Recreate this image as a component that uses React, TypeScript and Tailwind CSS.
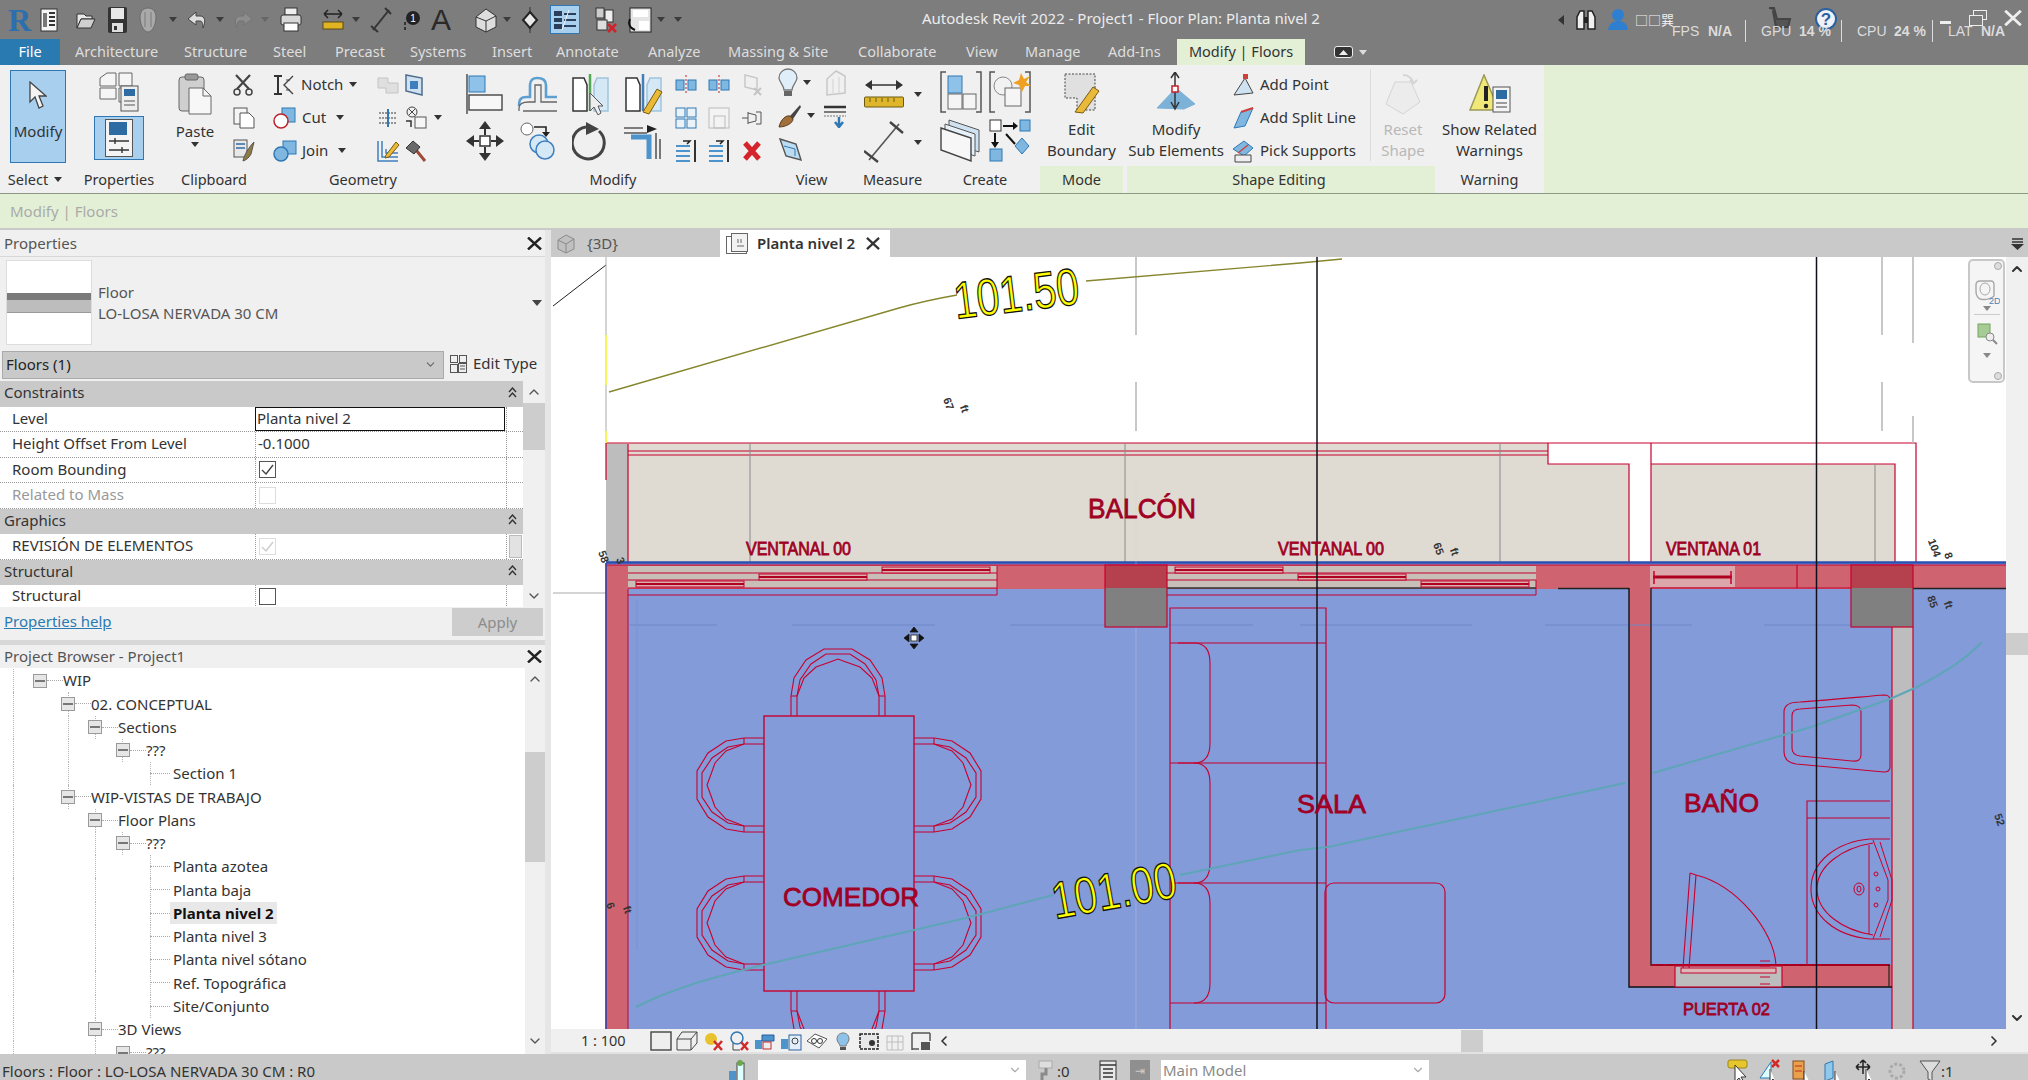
import type { ReactNode } from 'react'
import { ChevronDown, ChevronLeft, ChevronRight, ChevronUp } from 'lucide-react'

const Svg = ({ w, h, children }: { w: number; h: number; children: ReactNode }) => (
  <svg width={w} height={h} viewBox={`0 0 ${w} ${h}`} fill="none" className="shrink-0">
    {children}
  </svg>
)

const Caret = ({ color = '#444' }: { color?: string }) => (
  <svg width="8" height="5" viewBox="0 0 8 5" className="shrink-0">
    <path d="M0 0H8L4 5Z" fill={color} />
  </svg>
)

const CloseX = ({ w = 15, h = 13, color = '#222' }: { w?: number; h?: number; color?: string }) => (
  <svg width={w} height={h} viewBox="0 0 15 13" fill="none" className="shrink-0">
    <path d="M1 0.5L14 12.500M14 0.5L1 12.500" stroke={color} strokeWidth="2.4" />
  </svg>
)

/* quick access toolbar */
const QatHome = () => (
  <Svg w={18} h={24}>
    <rect x="1" y="1" width="16" height="22" fill="#f5f5f5" stroke="#333" />
    <path d="M9 5H15M9 9H15M9 13H15M9 17H15" stroke="#333" strokeWidth="2" />
    <rect x="3" y="5" width="4" height="14" fill="#777" />
  </Svg>
)
const QatOpen = () => (
  <Svg w={20} h={20}>
    <path d="M1 4H8L10 6H16V9H5L1 18Z" fill="#e8e8e8" stroke="#333" />
    <path d="M5 9H19L15 18H1Z" fill="#cfcfcf" stroke="#333" />
  </Svg>
)
const QatSave = () => (
  <Svg w={21} h={28}>
    <rect x="1" y="1" width="19" height="26" rx="2" fill="#333" />
    <rect x="4" y="2" width="13" height="11" fill="#e8e8e8" />
    <rect x="5" y="17" width="11" height="9" fill="#ddd" />
    <rect x="7" y="20" width="3" height="4" fill="#333" />
  </Svg>
)
const QatSync = () => (
  <Svg w={20} h={26}>
    <path d="M10 1C15 1 18 5 18 10C18 18 14 25 10 25C6 25 2 18 2 10C2 5 5 1 10 1Z" fill="#a9a9a9" stroke="#6b6b6b" />
    <path d="M7 5V20M13 5V20" stroke="#7a7a7a" />
  </Svg>
)
const QatUndo = ({ color = '#ddd' }: { color?: string }) => (
  <Svg w={20} h={20}>
    <path d="M9 2L1 9L9 15V11H13C15 11 16 13 16 18C19 11 18 6 13 6H9Z" fill={color} stroke="#444" />
  </Svg>
)
const QatRedo = () => (
  <Svg w={20} h={20}>
    <path d="M11 2L19 9L11 15V11H7C5 11 4 13 4 18C1 11 2 6 7 6H11Z" fill="#8d8d8d" stroke="#747474" />
  </Svg>
)
const QatPrint = () => (
  <Svg w={22} h={26}>
    <rect x="5" y="1" width="12" height="7" fill="#eee" stroke="#333" />
    <rect x="1" y="8" width="20" height="10" rx="2" fill="#d8d8d8" stroke="#333" />
    <rect x="4" y="16" width="14" height="8" fill="#fff" stroke="#333" />
  </Svg>
)
const QatRuler = () => (
  <Svg w={22} h={24}>
    <path d="M2 6H20M2 6L6 2M2 6L6 10M20 6L16 2M20 6L16 10" stroke="#222" strokeWidth="1.5" />
    <rect x="1" y="14" width="20" height="7" fill="#e0b422" stroke="#5b4a14" />
  </Svg>
)
const QatDiag = () => (
  <Svg w={22} h={26}>
    <path d="M3 23L19 3" stroke="#333" strokeWidth="2" />
    <path d="M1 19L8 25M15 1L21 7" stroke="#333" strokeWidth="2" />
  </Svg>
)
const QatTag = () => (
  <Svg w={20} h={24}>
    <circle cx="13" cy="10" r="7" fill="#222" />
    <text x="13" y="14" fontSize="10" fill="#fff" textAnchor="middle" fontFamily="Liberation Sans">1</text>
    <path d="M5 22V14" stroke="#333" strokeWidth="2" strokeDasharray="3 2" />
  </Svg>
)
const QatHouse = () => (
  <Svg w={22} h={26}>
    <path d="M1 10L11 2L21 9V20L11 25L1 20Z" fill="#ddd" stroke="#333" />
    <path d="M1 10L11 14L21 9M11 14V25" stroke="#333" />
  </Svg>
)
const QatSection = () => (
  <Svg w={20} h={28}>
    <path d="M10 1V27" stroke="#333" />
    <path d="M10 6L17 14L10 22L3 14Z" fill="#e8e8e8" stroke="#222" strokeWidth="2" />
  </Svg>
)
const QatThin = () => (
  <div className="w-[30px] h-[29px] bg-[#a9cfef] border border-[#2f78b4] flex items-center justify-center">
    <Svg w={24} h={22}>
      <rect x="1" y="2" width="8" height="5" fill="#2a3f5c" />
      <rect x="1" y="9" width="8" height="4" fill="#2a3f5c" />
      <rect x="1" y="15" width="8" height="5" fill="#2a3f5c" />
      <path d="M11 5H23M11 11H23M11 17H23" stroke="#2a3f5c" strokeWidth="2" />
      <path d="M9 21L16 1" stroke="#f5f5f5" />
    </Svg>
  </div>
)
const QatHidden = () => (
  <Svg w={24} h={28}>
    <rect x="2" y="2" width="8" height="10" fill="#ccc" stroke="#333" />
    <rect x="11" y="4" width="8" height="12" fill="#eee" stroke="#333" />
    <rect x="3" y="14" width="10" height="10" fill="#ddd" stroke="#333" />
    <path d="M14 18L22 26M22 18L14 26" stroke="#d0222a" strokeWidth="2.5" />
  </Svg>
)
const QatSwitch = () => (
  <Svg w={26} h={26}>
    <rect x="3" y="1" width="21" height="24" fill="#e5e5e5" stroke="#222" />
    <rect x="6" y="3" width="15" height="7" fill="#fff" />
    <rect x="12" y="14" width="10" height="9" fill="#fff" />
    <path d="M3 12C1 17 3 21 8 23" stroke="#111" strokeWidth="2" />
  </Svg>
)

/* ribbon icons */
const Pointer = () => (
  <Svg w={18} h={28}>
    <path d="M1 1V21L6 16L10 27L14 25L10 15H17Z" fill="#f4f4f4" stroke="#444" strokeWidth="1.3" />
  </Svg>
)
const TypeProps = () => (
  <Svg w={40} h={40}>
    <path d="M1 6L8 1H17V14H1ZM1 16H17V27L1 27ZM20 1H33V14H20ZM20 16H24V30H20Z" fill="#f5f5f5" stroke="#666" />
    <rect x="22" y="14" width="17" height="25" fill="#eee" stroke="#555" />
    <rect x="25" y="17" width="11" height="7" fill="#2e6ba3" />
    <path d="M25 29H36M25 33H36" stroke="#555" />
  </Svg>
)
const PropsPalette = () => (
  <div className="w-[50px] h-[44px] bg-[#a9cfef] border border-[#2f78b4] flex items-center justify-center">
    <Svg w={28} h={38}>
      <rect x="0.5" y="0.5" width="27" height="37" fill="#f4f4f4" stroke="#555" />
      <rect x="4" y="3" width="18" height="13" fill="#2e6ba3" />
      <path d="M4 22H24M4 31H24M10 19V25M17 28V34" stroke="#333" strokeWidth="1.4" />
    </Svg>
  </div>
)
const PasteIcon = () => (
  <Svg w={34} h={42}>
    <rect x="1" y="4" width="25" height="34" rx="3" fill="#cfcfcf" stroke="#666" />
    <rect x="7" y="1" width="13" height="6" rx="2" fill="#999" stroke="#666" />
    <path d="M11 15H25L33 23V41H11Z" fill="#f7f7f7" stroke="#666" />
    <path d="M25 15V23H33" stroke="#666" />
  </Svg>
)
const CutIcon = () => (
  <Svg w={20} h={22}>
    <path d="M3 1L16 15M17 1L4 15" stroke="#444" strokeWidth="2.2" />
    <circle cx="4" cy="18" r="3" stroke="#444" strokeWidth="1.5" />
    <circle cx="16" cy="18" r="3" stroke="#444" strokeWidth="1.5" />
  </Svg>
)
const CopyIcon = () => (
  <Svg w={22} h={22}>
    <rect x="1" y="1" width="13" height="16" fill="#f5f5f5" stroke="#555" />
    <path d="M7 6H16L21 11V21H7Z" fill="#fff" stroke="#555" />
  </Svg>
)
const MatchIcon = () => (
  <Svg w={22} h={24}>
    <rect x="1" y="1" width="13" height="17" fill="#e8e8e8" stroke="#555" />
    <path d="M3 5H12M3 9H12" stroke="#2e6ba3" strokeWidth="1.5" />
    <path d="M10 22C11 16 16 8 21 3L18 15C16 19 13 21 10 22Z" fill="#8f7c45" stroke="#555" />
  </Svg>
)
const NotchIcon = () => (
  <Svg w={22} h={22}>
    <path d="M1 2H9M1 20H9M5 2V20" stroke="#333" strokeWidth="2" />
    <path d="M20 2L11 11L20 20" stroke="#444" strokeWidth="1.4" />
    <path d="M13 6L17 6M13 16L17 16" stroke="#444" />
  </Svg>
)
const CutGeo = () => (
  <Svg w={24} h={22}>
    <rect x="9" y="1" width="13" height="14" fill="#7fb7e0" stroke="#2f78b4" />
    <circle cx="8" cy="14" r="7" fill="#fff" stroke="#c0222a" strokeWidth="1.5" />
  </Svg>
)
const JoinGeo = () => (
  <Svg w={24} h={22}>
    <rect x="10" y="1" width="13" height="13" fill="#7fb7e0" stroke="#2f78b4" />
    <circle cx="8" cy="14" r="7" fill="#7fb7e0" stroke="#2f78b4" strokeWidth="1.5" />
  </Svg>
)
const Gray3d = () => (
  <Svg w={24} h={24}>
    <path d="M2 5H12V10H22V20H10V15H2Z" fill="#dfdfdf" stroke="#c4c4c4" />
  </Svg>
)
const WallOpen = () => (
  <Svg w={20} h={24}>
    <path d="M2 2L18 5V22L2 18Z" fill="#cfe2f2" stroke="#4d6c8c" strokeWidth="1.5" />
    <rect x="6" y="8" width="8" height="8" fill="#3f7fbf" />
  </Svg>
)
const SplitGeo = () => (
  <Svg w={22} h={20}>
    <path d="M2 5H20M2 10H20M2 15H20" stroke="#777" strokeWidth="1.5" strokeDasharray="2 1" />
    <path d="M11 1V19" stroke="#2f78b4" strokeWidth="2" />
  </Svg>
)
const JoinSwitch = () => (
  <Svg w={24} h={24}>
    <circle cx="8" cy="6" r="5" stroke="#444" />
    <path d="M5 3L11 9M11 3L5 9" stroke="#444" />
    <rect x="11" y="11" width="11" height="11" stroke="#555" fill="#f6f6f6" />
    <path d="M2 15H7V21" stroke="#333" strokeWidth="1.5" />
  </Svg>
)
const PencilCorner = () => (
  <Svg w={24} h={24}>
    <path d="M2 2V22H22M6 2V18H22M10 10V14H22" stroke="#3f7fbf" strokeWidth="1.5" />
    <path d="M10 16L20 3L23 6L13 18L9 19Z" fill="#e9b93a" stroke="#7a5a12" />
  </Svg>
)
const Hammer = () => (
  <Svg w={24} h={24}>
    <path d="M12 11L21 22" stroke="#a04a3a" strokeWidth="3" />
    <path d="M2 9L9 2L16 8L10 15Z" fill="#6a6a6a" stroke="#333" />
  </Svg>
)
const AlignIcon = () => (
  <Svg w={38} h={42}>
    <path d="M1 1V41" stroke="#444" strokeWidth="1.4" />
    <rect x="3" y="3" width="16" height="16" fill="#8fc2e8" stroke="#2f78b4" />
    <rect x="3" y="22" width="33" height="15" fill="#f7f7f7" stroke="#444" strokeWidth="1.4" />
  </Svg>
)
const OffsetIcon = () => (
  <Svg w={42} h={38}>
    <path d="M2 31C2 24 4 22 10 22H13V10C13 5 16 3 20 3C26 3 29 5 29 10V22H40" stroke="#5c9fd0" strokeWidth="2.6" />
    <path d="M2 36V33C2 29 6 27 12 27H18V10H24V27H40M6 36H40" stroke="#666" strokeWidth="1.3" />
  </Svg>
)
const MirrorPick = ({ line, pen }: { line: string; pen?: boolean }) => (
  <Svg w={38} h={42}>
    <path d="M1 5H12L15 12V38H1Z" fill="#fff" stroke="#333" strokeWidth="1.5" />
    <path d="M25 5H36V38H22V12Z" fill="#d5e8f5" stroke="#9fc3dd" strokeWidth="1.5" />
    <path d="M18 1V38" stroke={line} strokeWidth="2.5" />
    {pen ? (
      <path d="M18 39L32 16L37 19L24 41Z" fill="#eab935" stroke="#7a5a12" />
    ) : (
      <path d="M18 20V38L22 34L26 42L29 40L26 33H31Z" fill="#eee" stroke="#555" />
    )}
  </Svg>
)
const MoveIcon = () => (
  <Svg w={40} h={42}>
    <path d="M20 1L26 9H14ZM20 41L14 33H26ZM1 21L9 15V27ZM39 21L31 15V27Z" fill="#333" />
    <path d="M20 9V15M20 27V33M9 21H14M26 21H31" stroke="#333" strokeWidth="2" />
    <rect x="15" y="16" width="10" height="10" stroke="#333" strokeWidth="1.5" fill="#fff" />
  </Svg>
)
const CopyCircles = () => (
  <Svg w={38} h={38}>
    <circle cx="8" cy="7" r="6" stroke="#666" fill="#fff" />
    <path d="M15 5H27V11" stroke="#222" strokeWidth="1.6" />
    <path d="M23 10H31L27 15Z" fill="#222" />
    <circle cx="20" cy="22" r="9" stroke="#3f7fbf" strokeWidth="1.5" fill="#d5e8f5" />
    <circle cx="26" cy="28" r="9" stroke="#3f7fbf" strokeWidth="1.5" fill="#d5e8f5" />
  </Svg>
)
const RotateIcon = () => (
  <Svg w={38} h={40}>
    <path d="M14 6A16 16 0 1 0 27 10" stroke="#444" strokeWidth="3" />
    <path d="M14 1L27 8L14 14Z" fill="#444" />
  </Svg>
)
const TrimIcon = () => (
  <Svg w={42} h={40}>
    <path d="M1 7H20M1 12H24" stroke="#555" strokeWidth="1.6" />
    <path d="M24 4L34 8L24 12Z" fill="#222" />
    <path d="M8 16H26V38" stroke="#4d94cc" strokeWidth="5" />
    <path d="M33 12V38M37 18V38" stroke="#444" strokeWidth="1.4" />
  </Svg>
)
const SplitVert = () => (
  <Svg w={22} h={20}>
    <rect x="1" y="5" width="8" height="10" fill="#7fb7e0" stroke="#2f78b4" />
    <rect x="13" y="5" width="8" height="10" fill="#7fb7e0" stroke="#2f78b4" />
    <path d="M11 0V20" stroke="#c0222a" strokeDasharray="2 2" />
  </Svg>
)
const GrayPin = () => (
  <Svg w={22} h={24}>
    <path d="M4 2L16 5V17L4 14Z" stroke="#c8c8c8" strokeWidth="1.5" />
    <path d="M13 15L20 22M20 15L13 22" stroke="#c4c4c4" strokeWidth="2" />
  </Svg>
)
const ArrayIcon = () => (
  <Svg w={22} h={22}>
    <rect x="1" y="1" width="9" height="9" stroke="#2f78b4" fill="#eaf3fa" />
    <rect x="12" y="1" width="9" height="9" stroke="#2f78b4" fill="#eaf3fa" />
    <rect x="1" y="12" width="9" height="9" stroke="#2f78b4" fill="#eaf3fa" />
    <rect x="12" y="12" width="9" height="9" stroke="#2f78b4" fill="#eaf3fa" />
  </Svg>
)
const ScaleIcon = () => (
  <Svg w={22} h={24}>
    <rect x="1" y="2" width="20" height="20" stroke="#bbb" fill="#f3f3f3" />
    <rect x="6" y="10" width="11" height="12" stroke="#bbb" />
  </Svg>
)
const PinIcon = () => (
  <Svg w={22} h={20}>
    <path d="M1 10H7M7 4V16M7 5L15 7V13L7 15M15 4H20V16H15" stroke="#555" />
  </Svg>
)
const TrimList = () => (
  <Svg w={22} h={24}>
    <path d="M1 7H15M1 12H15M1 17H15M1 22H15" stroke="#4d94cc" strokeWidth="2" />
    <path d="M8 2H15L12 5" stroke="#222" strokeWidth="1.5" />
    <path d="M20 1V23" stroke="#333" strokeWidth="2" />
  </Svg>
)
const DeleteX = () => (
  <Svg w={20} h={22}>
    <path d="M3 3L17 19M17 3L3 19" stroke="#d5242c" strokeWidth="5" />
  </Svg>
)
const Bulb = () => (
  <Svg w={20} h={30}>
    <path d="M10 1C15 1 19 5 19 10C19 14 14 17 14 22H6C6 17 1 14 1 10C1 5 5 1 10 1Z" fill="#dfeef9" stroke="#777" strokeWidth="1.3" />
    <rect x="6" y="23" width="8" height="5" fill="#666" />
  </Svg>
)
const GrayBuild = () => (
  <Svg w={24} h={28}>
    <path d="M3 10L12 2L21 7V24L3 26Z" stroke="#c8c8c8" strokeWidth="1.5" />
    <path d="M9 10V24M15 8V24" stroke="#d2d2d2" />
  </Svg>
)
const Brush = () => (
  <Svg w={24} h={24}>
    <path d="M12 12L22 1L23 3L15 15Z" fill="#444" />
    <path d="M1 23C3 15 8 11 12 12L15 15C15 19 8 23 1 23Z" fill="#a0703c" stroke="#5c3d1a" />
  </Svg>
)
const ThinLines = () => (
  <Svg w={22} h={24}>
    <path d="M0 3H22" stroke="#333" strokeWidth="2.5" />
    <path d="M0 8H22" stroke="#555" strokeWidth="1.5" />
    <path d="M0 12H22" stroke="#777" strokeDasharray="2 1" />
    <path d="M15 13V21M11 18L15 23L19 18" stroke="#2f78b4" strokeWidth="2.5" />
  </Svg>
)
const SectionBox = () => (
  <Svg w={24} h={26}>
    <path d="M2 3L18 8L23 24L8 20Z" fill="#bcdcf2" stroke="#555" strokeWidth="1.4" />
    <path d="M6 10L17 13V20" stroke="#2f78b4" />
  </Svg>
)
const DimLine = () => (
  <Svg w={40} h={30}>
    <path d="M2 6H38" stroke="#333" strokeWidth="1.5" />
    <path d="M1 6L8 1V11ZM39 6L32 1V11Z" fill="#333" />
    <rect x="0.5" y="18" width="39" height="10" rx="1" fill="#dfb62a" stroke="#6a5a14" />
    <path d="M6 19V23M12 19V23M18 19V23M24 19V23M30 19V23" stroke="#6a5a14" />
  </Svg>
)
const DiagDim = () => (
  <Svg w={40} h={42}>
    <path d="M5 39L35 3" stroke="#555" strokeWidth="1.6" />
    <path d="M0 30L14 41M26 1L39 12" stroke="#444" strokeWidth="2.4" />
  </Svg>
)
const GroupBox = () => (
  <Svg w={42} h={42}>
    <path d="M6 1H1V41H6M36 1H41V41H36" stroke="#555" strokeWidth="1.5" />
    <rect x="8" y="5" width="14" height="17" fill="#8fc2e8" stroke="#2f78b4" />
    <rect x="8" y="23" width="14" height="15" fill="#f5f5f5" stroke="#666" />
    <rect x="23" y="23" width="13" height="15" fill="#f5f5f5" stroke="#666" />
  </Svg>
)
const InPlaceBox = () => (
  <Svg w={42} h={42}>
    <path d="M6 1H1V41H6M36 1H41V41H36" stroke="#555" strokeWidth="1.5" />
    <circle cx="14" cy="15" r="9" fill="#f2f2f2" stroke="#888" />
    <rect x="16" y="17" width="16" height="18" fill="#f5f5f5" stroke="#666" />
    <path d="M32 2L35 8L41 5L37 11L42 15L36 15L33 21L30 14L24 12L30 9Z" fill="#f0a020" />
  </Svg>
)
const Folders = () => (
  <Svg w={42} h={44}>
    <path d="M9 2L39 12V34L9 24Z" fill="#cfe2f2" stroke="#555" />
    <path d="M5 6L35 16V38L5 28Z" fill="#e6f0f8" stroke="#555" />
    <path d="M1 10L31 20V43L1 32Z" fill="#f7f7f7" stroke="#444" strokeWidth="1.4" />
  </Svg>
)
const Flow = () => (
  <Svg w={42} h={44}>
    <rect x="1" y="2" width="11" height="11" fill="#fff" stroke="#333" />
    <path d="M14 8H26" stroke="#111" strokeWidth="2" />
    <path d="M24 4L29 8L24 12Z" fill="#111" />
    <rect x="31" y="2" width="10" height="11" fill="#7fb7e0" stroke="#2f78b4" />
    <path d="M6 15V26" stroke="#111" strokeWidth="2" />
    <path d="M2 24H10L6 30Z" fill="#111" />
    <path d="M17 16L26 26" stroke="#111" strokeWidth="2" />
    <rect x="1" y="31" width="12" height="12" fill="#7fb7e0" stroke="#2f78b4" />
    <path d="M33 20L40 28L33 36L26 28Z" fill="#7fb7e0" stroke="#2f78b4" />
  </Svg>
)
const EditBoundary = () => (
  <Svg w={38} h={42}>
    <path d="M2 2H32V38H14V26H2Z" fill="#e0e0e0" stroke="#444" strokeDasharray="2 1.5" />
    <path d="M12 40L30 15L36 19L20 41Z" fill="#e9b93a" stroke="#7a5a12" />
  </Svg>
)
const SubElements = () => (
  <Svg w={40} h={42}>
    <path d="M1 36L20 16L39 32L28 37Z" fill="#7db2d8" stroke="#7db2d8" />
    <path d="M19 1V35M15 6L19 0L23 6M15 30L19 37L23 30" stroke="#333" strokeWidth="1.5" />
    <rect x="16" y="14" width="6" height="6" fill="#fff" stroke="#c0222a" strokeWidth="1.5" />
  </Svg>
)
const AddPoint = () => (
  <Svg w={22} h={24}>
    <path d="M2 22L13 5L21 20Z" fill="#cfe2f2" stroke="#444" />
    <rect x="11" y="1" width="5" height="5" fill="#d0403a" />
  </Svg>
)
const AddSplit = () => (
  <Svg w={22} h={24}>
    <path d="M2 22L9 6L21 2L13 20Z" fill="#7fb7e0" stroke="#2f78b4" />
    <path d="M9 6L21 2" stroke="#d0403a" strokeWidth="2" />
  </Svg>
)
const PickSupports = () => (
  <Svg w={22} h={24}>
    <path d="M1 10L12 2L21 9L12 17Z" fill="#7fb7e0" stroke="#2f78b4" />
    <path d="M3 16H19V23H3Z" fill="#eee" stroke="#444" />
    <path d="M6 14L16 6" stroke="#d0403a" strokeWidth="1.5" />
  </Svg>
)
const ResetShape = () => (
  <Svg w={40} h={44}>
    <path d="M3 32L12 10H28L37 30L20 42Z" fill="#ececec" stroke="#d5d5d5" />
    <path d="M20 3C26 3 30 7 30 12M30 12L27 8M30 12L34 8" stroke="#d5d5d5" strokeWidth="2" />
  </Svg>
)
const WarnIcon = () => (
  <Svg w={42} h={40}>
    <path d="M15 1L30 36H1Z" fill="#f0e878" stroke="#9a9a55" strokeWidth="1.5" />
    <path d="M17 12V27" stroke="#222" strokeWidth="4" />
    <circle cx="17" cy="32" r="2.2" fill="#222" />
    <rect x="24" y="13" width="17" height="25" fill="#f4f4f4" stroke="#555" />
    <rect x="27" y="16" width="11" height="9" fill="#2e6ba3" />
    <path d="M27 29H38M27 33H38" stroke="#444" />
  </Svg>
)
const GrayStatus = ({ color = '#7a7a7a' }: { color?: string }) => (
  <Svg w={20} h={22}>
    <rect x="2" y="1" width="16" height="20" fill="#e8e8e8" stroke={color} />
    <path d="M2 5H18M5 9H15M5 13H15M5 17H15" stroke={color} strokeWidth="1.4" />
  </Svg>
)

const Panel = ({ className, label, labelClass = '', children }: { className: string; label?: ReactNode; labelClass?: string; children: ReactNode }) => (
  <div className={`flex flex-col shrink-0 ${className}`}>
    <div className="h-[101px] flex">{children}</div>
    <div className={`h-[27px] flex items-center justify-center text-[14.500px] text-[#333] ${labelClass}`}>{label}</div>
  </div>
)

const IconCell = ({ className = '', children }: { className?: string; children: ReactNode }) => (
  <div className={`flex items-center justify-center ${className}`}>{children}</div>
)

function TitleBar() {
  return (
    <div className="relative h-[39px] bg-[#7d7d7d] flex items-center shrink-0">
      <div className="w-[40px] pl-[8px] font-['Liberation_Serif'] font-bold text-[32px] leading-none text-[#2b6fae]">R</div>
      <QatHome />
      <div className="ml-[18px]"><QatOpen /></div>
      <div className="ml-[11px]"><QatSave /></div>
      <div className="ml-[10px]"><QatSync /></div>
      <div className="ml-[11px]"><Caret color="#3c3c3c" /></div>
      <div className="ml-[10px]"><QatUndo /></div>
      <div className="ml-[9px]"><Caret color="#3c3c3c" /></div>
      <div className="ml-[9px]"><QatRedo /></div>
      <div className="ml-[8px]"><Caret color="#666" /></div>
      <div className="ml-[11px]"><QatPrint /></div>
      <div className="ml-[20px]"><QatRuler /></div>
      <div className="ml-[8px]"><Caret color="#3c3c3c" /></div>
      <div className="ml-[10px]"><QatDiag /></div>
      <div className="ml-[8px]"><QatTag /></div>
      <div className="ml-[10px] w-[22px] font-['Liberation_Sans'] text-[30px] leading-none text-[#2a2a2a] text-center">A</div>
      <div className="ml-[23px]"><QatHouse /></div>
      <div className="ml-[6px]"><Caret color="#3c3c3c" /></div>
      <div className="ml-[9px]"><QatSection /></div>
      <div className="ml-[10px]"><QatThin /></div>
      <div className="ml-[14px]"><QatHidden /></div>
      <div className="ml-[9px]"><QatSwitch /></div>
      <div className="ml-[4px]"><Caret color="#3c3c3c" /></div>
      <div className="ml-[9px]"><Caret color="#3c3c3c" /></div>
      <div className="absolute left-[922px] top-[7px] text-[15px] text-[#ececec] whitespace-nowrap">Autodesk Revit 2022 - Project1 - Floor Plan: Planta nivel 2</div>

      {/* info center, with the HUD lying over it */}
      <div className="absolute left-[1558px] top-0 h-[39px] flex items-center">
        <svg width="6" height="10" viewBox="0 0 6 10"><path d="M6 0V10L0 5Z" fill="#333" /></svg>
        <div className="ml-[11px]">
          <Svg w={22} h={22}>
            <path d="M2 20V8L5 2H9V20ZM13 20V2H17L20 8V20Z" fill="#f0f0f0" stroke="#222" strokeWidth="1.5" />
            <rect x="9" y="8" width="4" height="6" fill="#222" />
          </Svg>
        </div>
        <div className="ml-[10px]">
          <Svg w={22} h={24}>
            <circle cx="11" cy="7" r="6" fill="#2e7fd0" />
            <path d="M1 22C2 15 6 13 11 13C16 13 20 15 21 22Z" fill="#2e7fd0" />
          </Svg>
        </div>
        <div className="ml-[6px] text-[13px] text-[#f0f0f0] whitespace-nowrap font-['Noto_Sans_CJK_SC']">□□巽</div>
      </div>
      <div className="absolute left-[1768px] top-[7px]">
        <Svg w={24} h={26}>
          <path d="M1 1H6L9 12H22L20 20H8L5 4" fill="#555" stroke="#444" strokeWidth="2" />
        </Svg>
      </div>
      <div className="absolute left-[1815px] top-[5px]">
        <Svg w={22} h={28}>
          <circle cx="11" cy="14" r="10" fill="#eef2f6" stroke="#2a5fa0" strokeWidth="2" />
          <text x="11" y="20" fontSize="17" fontWeight="700" textAnchor="middle" fill="#2a5fa0" fontFamily="Liberation Sans">?</text>
        </Svg>
      </div>
      <div className="absolute left-[1672px] top-[22px] w-[356px] h-[17px] flex items-center text-[14px] leading-none text-[#dcdcdc] whitespace-nowrap font-['Liberation_Sans']">
        <span className="w-[36px]">FPS</span>
        <span className="w-[37px] font-bold">N/A</span>
        <span className="w-px h-[22px] bg-[#ddd]" />
        <span className="w-[15px]" />
        <span className="w-[38px]">GPU</span>
        <span className="w-[42px] font-bold">14 %</span>
        <span className="w-px h-[22px] bg-[#ddd]" />
        <span className="w-[15px]" />
        <span className="w-[37px]">CPU</span>
        <span className="w-[38px] font-bold">24 %</span>
        <span className="w-px h-[22px] bg-[#ddd]" />
        <span className="w-[15px]" />
        <span className="w-[33px]">LAT</span>
        <span className="font-bold">N/A</span>
      </div>
      <div className="absolute left-[1940px] top-[21px] w-[11px] h-[3px] bg-[#eee]" />
      <div className="absolute left-[1969px] top-[10px]">
        <Svg w={18} h={16}>
          <rect x="4.5" y="0.5" width="13" height="9" stroke="#eee" />
          <rect x="0.5" y="5.5" width="13" height="10" stroke="#eee" fill="#7d7d7d" />
        </Svg>
      </div>
      <div className="absolute left-[2004px] top-[10px]"><CloseX w={18} h={16} color="#eee" /></div>
    </div>
  )
}

function TabRow() {
  const tabs: [string, string][] = [
    ['Architecture', 'w-[109px]'],
    ['Structure', 'w-[89px]'],
    ['Steel', 'w-[62px]'],
    ['Precast', 'w-[75px]'],
    ['Systems', 'w-[82px]'],
    ['Insert', 'w-[64px]'],
    ['Annotate', 'w-[92px]'],
    ['Analyze', 'w-[80px]'],
    ['Massing & Site', 'w-[130px]'],
    ['Collaborate', 'w-[108px]'],
    ['View', 'w-[59px]'],
    ['Manage', 'w-[83px]'],
    ['Add-Ins', 'w-[69px]'],
  ]
  return (
    <div className="h-[26px] bg-[#7d7d7d] flex items-stretch text-[14.500px] shrink-0">
      <div className="w-[60px] mr-[15px] bg-[#2a7ab2] text-white flex items-center justify-center">File</div>
      {tabs.map(([label, w]) => (
        <div key={label} className={`${w} text-[#dedede] flex items-center`}>{label}</div>
      ))}
      <div className="w-[128px] bg-[#e3f0d6] text-[#333] flex items-center justify-center">Modify | Floors</div>
      <div className="ml-[29px] flex items-center gap-[6px]">
        <div className="w-[19px] h-[12px] rounded-[3px] bg-[#333] border border-[#eee] flex items-center justify-center">
          <svg width="9" height="5" viewBox="0 0 9 5"><path d="M0 5L4.500 0L9 5Z" fill="#eee" /></svg>
        </div>
        <Caret color="#ddd" />
      </div>
    </div>
  )
}

function Ribbon() {
  return (
    <div className="h-[129px] bg-[#e3f0d6] border-b border-[#8b9a83] flex shrink-0">
      <div className="w-[1040px] flex bg-[#f0f0f0]">
        <Panel className="w-[78px]" label={<span className="flex items-center gap-[6px] -ml-[8px]">Select <Caret color="#333" /></span>}>
          <div className="ml-[10px] mt-[5px] w-[56px] h-[93px] bg-[#a9cfef] border border-[#2f78b4] flex flex-col items-center pt-[10px] text-[15px] text-[#333]">
            <Pointer />
            <span className="mt-[11px]">Modify</span>
          </div>
        </Panel>
        <Panel className="w-[82px]" label="Properties">
          <div className="w-full flex flex-col items-center pt-[7px] gap-[4px]">
            <TypeProps />
            <PropsPalette />
          </div>
        </Panel>
        <Panel className="w-[108px]" label="Clipboard">
          <div className="w-[70px] flex flex-col items-center pt-[8px] text-[15px] text-[#333]">
            <PasteIcon />
            <span className="mt-[5px] leading-[22px]">Paste</span>
            <Caret color="#333" />
          </div>
          <div className="flex-1 grid grid-rows-3 h-[99px] mt-[3px]">
            <IconCell className="justify-start pl-[3px]"><CutIcon /></IconCell>
            <IconCell className="justify-start pl-[3px]"><CopyIcon /></IconCell>
            <IconCell className="justify-start pl-[3px]"><MatchIcon /></IconCell>
          </div>
        </Panel>
        <Panel className="w-[190px]" label="Geometry">
          <div className="w-[104px] pl-[5px] grid grid-rows-3 h-[99px] mt-[3px] text-[15px] text-[#333]">
            <div className="flex items-center gap-[6px]"><NotchIcon /> Notch <Caret color="#333" /></div>
            <div className="flex items-center gap-[5px]"><CutGeo /> Cut <span className="ml-[5px]"><Caret color="#333" /></span></div>
            <div className="flex items-center gap-[5px]"><JoinGeo /> Join <span className="ml-[5px]"><Caret color="#333" /></span></div>
          </div>
          <div className="w-[32px] grid grid-rows-3 h-[99px] mt-[3px]">
            <IconCell><Gray3d /></IconCell>
            <IconCell><SplitGeo /></IconCell>
            <IconCell><PencilCorner /></IconCell>
          </div>
          <div className="flex-1 grid grid-rows-3 h-[99px] mt-[3px]">
            <IconCell className="justify-start"><WallOpen /></IconCell>
            <IconCell className="justify-start gap-[6px]"><JoinSwitch /> <Caret color="#333" /></IconCell>
            <IconCell className="justify-start"><Hammer /></IconCell>
          </div>
        </Panel>
        <Panel className="w-[310px]" label="Modify">
          <div className="w-[212px] grid grid-cols-4 grid-rows-2 h-[99px] pt-[5px]">
            <IconCell><AlignIcon /></IconCell>
            <IconCell><OffsetIcon /></IconCell>
            <IconCell><MirrorPick line="#53a853" /></IconCell>
            <IconCell><MirrorPick line="#3f7fbf" pen /></IconCell>
            <IconCell><MoveIcon /></IconCell>
            <IconCell><CopyCircles /></IconCell>
            <IconCell><RotateIcon /></IconCell>
            <IconCell><TrimIcon /></IconCell>
          </div>
          <div className="flex-1 grid grid-cols-3 grid-rows-3 h-[99px] mt-[3px]">
            <IconCell><SplitVert /></IconCell>
            <IconCell><SplitVert /></IconCell>
            <IconCell><GrayPin /></IconCell>
            <IconCell><ArrayIcon /></IconCell>
            <IconCell><ScaleIcon /></IconCell>
            <IconCell><PinIcon /></IconCell>
            <IconCell><TrimList /></IconCell>
            <IconCell><TrimList /></IconCell>
            <IconCell><DeleteX /></IconCell>
          </div>
        </Panel>
        <Panel className="w-[87px]" label="View">
          <div className="w-[56px] pl-[10px] grid grid-rows-3 h-[99px] mt-[1px]">
            <div className="flex items-center gap-[5px]"><Bulb /> <Caret color="#333" /></div>
            <div className="flex items-center gap-[5px]"><Brush /> <Caret color="#333" /></div>
            <div className="flex items-center"><SectionBox /></div>
          </div>
          <div className="flex-1 grid grid-rows-3 h-[99px] mt-[1px]">
            <IconCell className="justify-start"><GrayBuild /></IconCell>
            <IconCell className="justify-start"><ThinLines /></IconCell>
          </div>
        </Panel>
        <Panel className="w-[75px]" label="Measure">
          <div className="flex flex-col pl-[9px] pt-[4px] gap-[12px] h-[99px]">
            <div className="flex items-center gap-[10px] mt-[10px]"><DimLine /> <Caret color="#333" /></div>
            <div className="flex items-center gap-[10px]"><DiagDim /> <Caret color="#333" /></div>
          </div>
        </Panel>
        <Panel className="w-[110px]" label="Create">
          <div className="w-full grid grid-cols-2 grid-rows-2 h-[99px] px-[6px] pt-[3px]">
            <IconCell><GroupBox /></IconCell>
            <IconCell><InPlaceBox /></IconCell>
            <IconCell><Folders /></IconCell>
            <IconCell><Flow /></IconCell>
          </div>
        </Panel>
      </div>
      <div className="flex bg-[#f0f0f0] w-[504px]">
        <Panel className="w-[83px]" label="Mode" labelClass="bg-[#e3f0d6]">
          <div className="w-full flex flex-col items-center pt-[7px] text-[15px] leading-[21px] text-[#333] text-center">
            <EditBoundary />
            <span className="mt-[5px]">Edit</span>
            <span>Boundary</span>
          </div>
        </Panel>
        <Panel className="w-[312px]" label="Shape Editing" labelClass="bg-[#e3f0d6] ml-[4px] pr-[4px]">
          <div className="w-[106px] flex flex-col items-center pt-[7px] text-[15px] leading-[21px] text-[#333] text-center whitespace-nowrap">
            <SubElements />
            <span className="mt-[5px]">Modify</span>
            <span>Sub Elements</span>
          </div>
          <div className="w-[141px] pl-[3px] grid grid-rows-3 h-[99px] mt-[3px] text-[15px] text-[#333] whitespace-nowrap">
            <div className="flex items-center gap-[6px]"><AddPoint /> Add Point</div>
            <div className="flex items-center gap-[6px]"><AddSplit /> Add Split Line</div>
            <div className="flex items-center gap-[6px]"><PickSupports /> Pick Supports</div>
          </div>
          <div className="w-px h-[92px] mt-[4px] bg-[#dcdcdc]" />
          <div className="flex-1 flex flex-col items-center pt-[7px] text-[15px] leading-[21px] text-[#b8b8b8] text-center">
            <ResetShape />
            <span className="mt-[3px]">Reset</span>
            <span>Shape</span>
          </div>
        </Panel>
        <Panel className="flex-1" label="Warning">
          <div className="w-full flex flex-col items-center pt-[9px] text-[15px] leading-[21px] text-[#333] text-center whitespace-nowrap">
            <WarnIcon />
            <span className="mt-[5px]">Show Related</span>
            <span>Warnings</span>
          </div>
        </Panel>
      </div>
    </div>
  )
}

const DoubleUp = () => (
  <svg width="9" height="11" viewBox="0 0 9 11" fill="none" className="shrink-0">
    <path d="M1 5L4.500 1L8 5M1 10L4.500 6L8 10" stroke="#333" strokeWidth="1.4" />
  </svg>
)

const GroupRow = ({ label }: { label: string }) => (
  <div className="h-[25.500px] bg-[#c9c9c9] flex items-center text-[15px] text-[#333] pl-[4px] pr-[6px] pb-[3px] justify-between">
    <span>{label}</span>
    <DoubleUp />
  </div>
)

const ValueRow = ({ label, muted, h = 'h-[25.500px]', gutter, children }: { label: string; muted?: boolean; h?: string; gutter?: ReactNode; children?: ReactNode }) => (
  <div className={`${h} bg-white flex text-[15px] border-b border-dotted border-[#999] overflow-hidden`}>
    <div className={`w-[255px] pl-[12px] pb-[2px] flex items-center ${muted ? 'text-[#999]' : 'text-[#333]'}`}>{label}</div>
    <div className="w-[252px] border-x border-dotted border-[#999] flex items-center text-[#333]">{children}</div>
    <div className="flex-1 flex items-center justify-center">{gutter}</div>
  </div>
)

const Check = ({ checked, muted }: { checked?: boolean; muted?: boolean }) => (
  <div className={`ml-[3px] w-[17px] h-[17px] border flex items-center justify-center ${muted ? 'border-[#ddd]' : 'border-[#555]'}`}>
    {checked && (
      <svg width="13" height="11" viewBox="0 0 13 11" fill="none">
        <path d="M1 6L5 10L12 1" stroke={muted ? '#ccc' : '#444'} strokeWidth="1.4" />
      </svg>
    )}
  </div>
)

function PropertiesPanel() {
  return (
    <div className="shrink-0">
      <div className="h-[27px] pl-[4px] pr-[3px] flex items-center justify-between text-[15px] text-[#555] border-b border-[#d8d8d8]">
        <span>Properties</span>
        <CloseX />
      </div>
      <div className="h-[91px] flex items-center relative">
        <div className="ml-[6px] w-[86px] h-[85px] bg-white border border-[#ddd] flex flex-col justify-center">
          <div className="h-[7px] bg-[#7a7a7a]" />
          <div className="h-[13px] bg-[#bdbdbd] border-b border-[#999]" />
        </div>
        <div className="ml-[6px] text-[15px] leading-[21px] text-[#555]">
          <div>Floor</div>
          <div>LO-LOSA NERVADA 30 CM</div>
        </div>
        <svg width="10" height="6" viewBox="0 0 10 6" className="ml-auto mr-[3px]"><path d="M0 0H10L5 6Z" fill="#444" /></svg>
      </div>
      <div className="h-[28px] mt-[3px] flex items-center">
        <div className="ml-[2px] w-[442px] h-[28px] bg-[#c9c9c9] border border-[#aaa] flex items-center justify-between pl-[3px] pr-[6px] pb-[2px] text-[15px] text-[#222]">
          <span>Floors (1)</span>
          <ChevronDown className="w-[13px] h-[13px] text-[#666]" />
        </div>
        <div className="ml-[6px] pb-[3px] flex items-center gap-[6px] text-[15px] text-[#333]">
          <Svg w={17} h={18}>
            <rect x="0.5" y="0.5" width="7" height="7" stroke="#555" />
            <rect x="9.500" y="0.5" width="7" height="7" stroke="#555" />
            <rect x="0.5" y="9.500" width="7" height="8" stroke="#555" />
            <rect x="8.500" y="8.500" width="8" height="9" fill="#eee" stroke="#555" />
            <path d="M10 11H15M10 14H15" stroke="#555" />
          </Svg>
          Edit Type
        </div>
      </div>
      <div className="h-[226px] mt-[2px] flex">
        <div className="w-[523px] overflow-hidden">
          <GroupRow label="Constraints" />
          <ValueRow label="Level">
            <div className="w-full h-[24px] bg-white border border-[#111] flex items-center pl-[1px] pb-[2px] -ml-px">Planta nivel 2</div>
          </ValueRow>
          <ValueRow label="Height Offset From Level"><span className="pl-[2px] pb-[2px]">-0.1000</span></ValueRow>
          <ValueRow label="Room Bounding"><Check checked /></ValueRow>
          <ValueRow label="Related to Mass" muted><Check muted /></ValueRow>
          <GroupRow label="Graphics" />
          <ValueRow label="REVISIÓN DE ELEMENTOS" gutter={<div className="w-[13px] h-[23px] bg-[#e2e2e2] border border-[#bbb]" />}>
            <Check checked muted />
          </ValueRow>
          <GroupRow label="Structural" />
          <ValueRow label="Structural" h="h-[24px]"><Check /></ValueRow>
        </div>
        <div className="w-[22px] bg-[#f0f0f0] flex flex-col items-center">
          <div className="h-[22px] flex items-center"><ChevronUp className="w-[16px] h-[16px] text-[#555]" strokeWidth={2} /></div>
          <div className="w-full h-[47px] bg-[#cdcdcd]" />
          <div className="mt-auto h-[22px] flex items-center"><ChevronDown className="w-[16px] h-[16px] text-[#555]" strokeWidth={2} /></div>
        </div>
      </div>
      <div className="h-[33px] flex items-center justify-between pl-[4px] pr-[2px]">
        <span className="text-[15px] text-[#2a7ab2] underline pb-[5px]">Properties help</span>
        <div className="w-[91px] h-[28px] mb-[3px] bg-[#cdcdcd] flex items-center justify-center text-[15px] text-[#8c8c8c]">Apply</div>
      </div>
    </div>
  )
}

type TreeRow = { level: number; label: string; box: boolean; bold?: boolean; guides: number[] }

const indents = ['ml-[33px]', 'ml-[61px]', 'ml-[88px]', 'ml-[116px]', 'ml-[150px]']

const treeRows: TreeRow[] = [
  { level: 0, label: 'WIP', box: true, guides: [13] },
  { level: 1, label: '02. CONCEPTUAL', box: true, guides: [13, 68] },
  { level: 2, label: 'Sections', box: true, guides: [13, 68, 95] },
  { level: 3, label: '???', box: true, guides: [13, 68, 122] },
  { level: 4, label: 'Section 1', box: false, guides: [13, 68, 150] },
  { level: 1, label: 'WIP-VISTAS DE TRABAJO', box: true, guides: [13, 68] },
  { level: 2, label: 'Floor Plans', box: true, guides: [13, 95] },
  { level: 3, label: '???', box: true, guides: [13, 95, 122] },
  { level: 4, label: 'Planta azotea', box: false, guides: [13, 95, 150] },
  { level: 4, label: 'Planta baja', box: false, guides: [13, 95, 150] },
  { level: 4, label: 'Planta nivel 2', box: false, bold: true, guides: [13, 95, 150] },
  { level: 4, label: 'Planta nivel 3', box: false, guides: [13, 95, 150] },
  { level: 4, label: 'Planta nivel sótano', box: false, guides: [13, 95, 150] },
  { level: 4, label: 'Ref. Topográfica', box: false, guides: [13, 95, 150] },
  { level: 4, label: 'Site/Conjunto', box: false, guides: [13, 95, 150] },
  { level: 2, label: '3D Views', box: true, guides: [13, 95] },
  { level: 3, label: '???', box: true, guides: [13, 95] },
]

function ProjectBrowser() {
  return (
    <div className="flex-1 flex flex-col min-h-0">
      <div className="h-[23px] pl-[4px] pr-[3px] flex items-center justify-between text-[15px] text-[#555] shrink-0">
        <span>Project Browser - Project1</span>
        <CloseX />
      </div>
      <div className="flex-1 flex min-h-0">
        <div className="w-[525px] bg-white overflow-hidden text-[15px] text-[#333] pt-[1px]">
          {treeRows.map((r, i) => (
            <div key={i} className="relative h-[23.250px] flex items-center whitespace-nowrap">
              {r.guides.map(g => (
                <span key={g} className="absolute top-0 bottom-0 border-l border-dotted border-[#b5b5b5]" style={{ left: g }} />
              ))}
              <div className={`relative flex items-center ${indents[r.level]}`}>
                {r.box ? (
                  <div className="w-[14px] h-[14px] bg-[#e6e6e6] border border-[#9a9a9a] flex items-center justify-center">
                    <span className="w-[10px] h-[2px] bg-[#777]" />
                  </div>
                ) : null}
                <span className={`border-t border-dotted border-[#aaa] ${r.box ? 'w-[16px]' : 'w-[20px]'}`} />
                <span className={`${r.box ? '' : 'pl-[3px]'} ${r.bold ? 'font-bold text-[#111] bg-[#e8e8e8] pr-[3px]' : ''}`}>{r.label}</span>
              </div>
            </div>
          ))}
        </div>
        <div className="w-[20px] bg-[#f0f0f0] flex flex-col items-center">
          <div className="h-[22px] flex items-center"><ChevronUp className="w-[16px] h-[16px] text-[#555]" strokeWidth={2} /></div>
          <div className="mt-[62px] w-full h-[110px] bg-[#cdcdcd]" />
          <div className="mt-auto h-[26px] flex items-center"><ChevronDown className="w-[16px] h-[16px] text-[#555]" strokeWidth={2} /></div>
        </div>
      </div>
    </div>
  )
}

const red = '#c8002e'
const wall = '#cf6470'

const Label = ({ x, y, w, size, children }: { x: number; y: number; w: number; size: number; children: string }) => (
  <text x={x} y={y} fontSize={size} fill="#a00024" stroke="#a00024" strokeWidth="0.8" fontFamily="Liberation Sans" textLength={w} lengthAdjust="spacingAndGlyphs">
    {children}
  </text>
)

const Elevation = ({ x, y, angle, children }: { x: number; y: number; angle: number; children: string }) => (
  <text transform={`translate(${x} ${y}) rotate(${angle})`} fontSize="52" fill="#ffff00" stroke="#111" strokeWidth="1.3" fontFamily="Liberation Sans" textLength="126" lengthAdjust="spacingAndGlyphs" textAnchor="start">
    {children}
  </text>
)

const Tag = ({ x, y, t }: { x: number; y: number; t: string }) => (
  <text transform={`translate(${x} ${y}) rotate(70)`} fontSize="11" fontWeight="700" fill="#333" fontFamily="Liberation Sans" textAnchor="middle">
    {t}
  </text>
)

const Chair = ({ x, y, r }: { x: number; y: number; r: number }) => (
  <g transform={`translate(${x} ${y}) rotate(${r})`} stroke={red} strokeWidth="1.1" fill="none">
    <path d="M-47 0V-20L-44 -38L-32 -56L-14 -67H14L32 -56L44 -38L47 -20V0" />
    <path d="M-41 0V-20L-38 -36L-27 -52L-12 -62H12L27 -52L38 -36L41 -20V0" />
    <path d="M-41 -20L-34 -38L-22 -49L-8 -54L0 -57L8 -54L22 -49L34 -38L41 -20" />
    <path d="M-47 -20H-41M47 -20H41" />
  </g>
)

const Strip = ({ x, y }: { x: number; y: number }) => (
  <g>
    <rect x={x} y={y} width="108" height="6" fill="#d9b0ad" stroke={red} strokeWidth="1" />
    <path d={`M${x} ${y + 3}H${x + 108}`} stroke="#b0001f" strokeWidth="2" />
  </g>
)

function PlanDrawing() {
  const dashes = [
    [630, 717], [792, 935], [1010, 1253], [1300, 1472], [1545, 1692], [1764, 1890],
  ]
  const cushions = [[643, 763], [763, 883], [883, 1003]]
  return (
    <svg width="1455" height="772" viewBox="551 257 1455 772" className="block bg-white">
      {/* balcony */}
      <path d="M606 443H1548V464H1629V563H606Z" fill="#dfdbd2" />
      <path d="M1651 464H1895V563H1651Z" fill="#dfdbd2" />
      <rect x="606" y="444" width="22" height="119" fill="#bdbdbd" />
      <path d="M606 443H1916V562M1548 443V464H1629V562M1651 443V562M1651 464H1895V562" stroke={red} strokeWidth="1.2" fill="none" />
      <path d="M628 451H1548M628 455H1548M628 444V563M606 443V480" stroke={red} strokeWidth="1.2" fill="none" />
      <path d="M750 443V562M1125 443V562M1500 443V562M1875 464V562" stroke="#8a8a8a" strokeWidth="1" />

      {/* grid lines above the plan */}
      <path d="M553 306L606 265" stroke="#222" strokeWidth="1" />
      <path d="M606 257V443" stroke="#aaa" strokeWidth="1" />
      <path d="M606 335V385M606 431V443" stroke="#ffff30" strokeWidth="1.5" />
      <path d="M1136 257V335M1136 382V431M1882 257V335M1882 382V431M1913 257V343M1913 416V443" stroke="#b5b5b5" strokeWidth="1.5" />
      <path d="M609 392L899 308C920 302 940 298 957 295M1086 281L1300 263L1342 259" stroke="#86862e" strokeWidth="1.4" fill="none" />
      <path d="M553 593H606" stroke="#aaa" strokeWidth="1" />

      {/* floor and walls */}
      <rect x="606" y="563" width="1400" height="466" fill="#839bd9" />
      <rect x="606" y="565" width="1400" height="24" fill={wall} />
      <rect x="606" y="565" width="22" height="464" fill={wall} />
      <rect x="1629" y="588" width="22" height="399" fill={wall} />
      <rect x="1629" y="965" width="263" height="22" fill={wall} />
      <path d="M606 562.500H2006" stroke="#2a4fb0" strokeWidth="2.5" />
      <path d="M606 565H2006M606 1029V563M628 589V1029" stroke={red} strokeWidth="1" fill="none" />
      <path d="M606 563V1029" stroke="#2a4fb0" strokeWidth="1.5" />
      {dashes.map(([a, b]) => (
        <path key={a} d={`M${a} 625H${b}`} stroke="#6f88c8" strokeWidth="1.2" />
      ))}
      <path d="M1136 480V1029" stroke="#cfd4e6" strokeWidth="1" opacity="0.35" />
      <path d="M637 600V950" stroke="#7a92d0" strokeWidth="1" />

      {/* windows */}
      <rect x="628" y="566" width="369" height="22" fill="#c8c0b8" />
      <rect x="1167" y="566" width="369" height="22" fill="#c8c0b8" />
      <path d="M628 573H997M628 580H997M628 588H997M628 595H997M997 566V595" stroke={red} strokeWidth="1" fill="none" />
      <path d="M1167 573H1536M1167 580H1536M1167 595H1536M1536 580V595" stroke={red} strokeWidth="1" fill="none" />
      <path d="M1167 588H1536" stroke="#333" strokeWidth="1.4" />
      <Strip x={882} y={567} /><Strip x={759} y={574} /><Strip x={636} y={581} />
      <Strip x={1175} y={567} /><Strip x={1298} y={574} /><Strip x={1421} y={581} />
      <rect x="1650" y="566" width="85" height="21" fill="#dba7aa" />
      <path d="M1653 577H1732" stroke="#b0001f" strokeWidth="3" />
      <path d="M1654 571V584M1731 571V584" stroke={red} strokeWidth="1.5" />
      <path d="M1558 588.500H1629M1913 588.500H2006" stroke="#222" strokeWidth="1.4" />
      <path d="M1651 588H1892M1797 565V588" stroke={red} strokeWidth="1.2" />

      {/* columns */}
      <rect x="1105" y="565" width="62" height="23" fill="#b5414f" />
      <rect x="1105" y="588" width="62" height="39" fill="#808080" />
      <rect x="1105" y="565" width="62" height="62" stroke={red} strokeWidth="1.2" fill="none" />
      <rect x="1892" y="588" width="21" height="441" fill="#bdbdbd" />
      <rect x="1851" y="565" width="62" height="23" fill="#b5414f" />
      <rect x="1851" y="588" width="62" height="39" fill="#808080" />
      <rect x="1851" y="565" width="62" height="62" stroke={red} strokeWidth="1.2" fill="none" />
      <path d="M1892 627V1029M1913 627V1029" stroke={red} strokeWidth="1.2" />

      {/* interior wall */}
      <path d="M1629 588V987H1892" stroke="#111" strokeWidth="1.4" fill="none" />
      <path d="M1651 588V965H1890" stroke="#222" strokeWidth="1.4" fill="none" />
      <path d="M1651 965H1890" stroke="#a8001f" strokeWidth="2" />
      <path d="M1889 965V987" stroke="#222" strokeWidth="1.2" />
      <rect x="1675" y="966" width="107" height="21" fill="#bdbdbd" stroke={red} strokeWidth="1.2" />
      <rect x="1681" y="968" width="95" height="5" fill="#dcb9b7" stroke={red} strokeWidth="1" />
      <path d="M1760 961H1770M1760 966H1770M1760 977H1770M1760 984H1770" stroke={red} strokeWidth="1.2" />

      {/* door swing */}
      <path d="M1690 873L1683 968M1696 875L1689 968M1690 873L1696 875C1736 885 1774 930 1776 965" stroke={red} strokeWidth="1.1" fill="none" />

      {/* bathroom fixtures */}
      <path d="M1800 702C1830 700 1860 697 1884 695Q1890 695 1890 700V767Q1890 772 1884 772L1796 764Q1784 762 1784 752V712Q1784 702 1800 702Z" stroke={red} strokeWidth="1.1" fill="none" />
      <path d="M1800 709L1852 705Q1861 705 1861 712V755Q1861 762 1852 761L1800 756Q1792 755 1792 748V716Q1792 709 1800 709Z" stroke={red} strokeWidth="1.1" fill="none" />
      <path d="M1807 965V801H1890M1807 818H1890" stroke={red} strokeWidth="1.1" fill="none" />
      <path d="M1890 839H1870C1836 842 1811 862 1811 889C1811 916 1836 936 1870 939H1890" stroke={red} strokeWidth="1.1" fill="none" />
      <path d="M1873 843C1842 848 1817 866 1817 889C1817 912 1842 930 1873 935" stroke={red} strokeWidth="1.1" fill="none" />
      <path d="M1869 845V934M1873 840L1888 880V900L1873 939M1880 842L1892 880V900L1880 937" stroke={red} strokeWidth="1" fill="none" />
      <ellipse cx="1859" cy="889" rx="5" ry="6" stroke={red} strokeWidth="1" fill="none" />
      <ellipse cx="1859" cy="889" rx="2" ry="3" stroke={red} strokeWidth="1" fill="none" />
      <circle cx="1876" cy="874" r="2" stroke={red} fill="none" />
      <circle cx="1878" cy="889" r="2" stroke={red} fill="none" />
      <circle cx="1876" cy="905" r="2" stroke={red} fill="none" />

      {/* table and chairs */}
      <Chair x={838} y={716} r={0} />
      <Chair x={838} y={991} r={180} />
      <Chair x={764} y={785} r={-90} />
      <Chair x={764} y={923} r={-90} />
      <Chair x={914} y={785} r={90} />
      <Chair x={914} y={923} r={90} />
      <rect x="764" y="716" width="150" height="275" fill="#839bd9" stroke={red} strokeWidth="1.4" />

      {/* sofa */}
      <path d="M1170 1029V608H1326V1029M1170 643H1326M1170 763H1326M1170 883H1326M1170 1003H1326" stroke={red} strokeWidth="1.2" fill="none" />
      {cushions.map(([a, b]) => (
        <path key={a} d={`M1178 ${a}H1194Q1210 ${a} 1210 ${a + 20}V${b - 20}Q1210 ${b} 1194 ${b}`} stroke={red} strokeWidth="1.1" fill="none" />
      ))}
      <rect x="1325" y="883" width="120" height="120" rx="9" stroke={red} strokeWidth="1.2" fill="none" />

      {/* contour */}
      <path d="M636 1007C680 985 720 976 763 965L966 918L1053 895M1180 875L1300 850L1328 847L1625 783M1653 773L1811 727L1890 699L1917 687C1945 672 1965 660 1982 642" stroke="#5fa5b8" strokeWidth="2" fill="none" />

      {/* tall grid lines over the plan */}
      <path d="M1317 257V1029M1816.500 257V1029" stroke="#101018" strokeWidth="1.5" />

      {/* text */}
      <Elevation x={956} y={319} angle={-7}>101.50</Elevation>
      <Elevation x={1055} y={919} angle={-10}>101.00</Elevation>
      <Label x={1088} y={518} w={108} size={28}>BALCÓN</Label>
      <Label x={746} y={555} w={105} size={18}>VENTANAL 00</Label>
      <Label x={1278} y={555} w={106} size={18}>VENTANAL 00</Label>
      <Label x={1666} y={555} w={95} size={18}>VENTANA 01</Label>
      <Label x={783} y={906} w={136} size={26}>COMEDOR</Label>
      <Label x={1297} y={813} w={69} size={26}>SALA</Label>
      <Label x={1684} y={812} w={75} size={26}>BAÑO</Label>
      <Label x={1683} y={1015} w={87} size={17}>PUERTA 02</Label>

      <Tag x={945} y={405} t="67" /><Tag x={961} y={410} t="ft" />
      <Tag x={600} y={558} t="58" /><Tag x={617} y={562} t="3" />
      <Tag x={1435} y={550} t="65" /><Tag x={1451} y={553} t="ft" />
      <Tag x={1931} y={549} t="104" /><Tag x={1945} y={557} t="8" />
      <Tag x={1929} y={603} t="85" /><Tag x={1945} y={606} t="ft" />
      <Tag x={607} y={907} t="6" /><Tag x={624} y={911} t="ft" />
      <Tag x={1996} y={821} t="52" />

      {/* mouse cursor */}
      <g stroke="#1a1a1a" fill="#fff" strokeWidth="0.8">
        <path d="M914 627L918 632H910ZM914 649L910 644H918ZM904 638L909 634V642ZM924 638L919 634V642Z" fill="#111" />
        <rect x="911" y="635" width="6" height="6" />
      </g>
    </svg>
  )
}

const FooterIcon = ({ children }: { children: ReactNode }) => <Svg w={22} h={20}>{children}</Svg>

function ViewFooter() {
  return (
    <div className="h-[25px] bg-[#f0f0f0] border-b-[2px] border-[#e2e2e2] flex items-center text-[14.500px] text-[#333] shrink-0">
      <span className="ml-[30px] w-[68px]">1 : 100</span>
      <div className="flex items-center gap-[4px] ml-[1px]">
        <FooterIcon><rect x="1" y="1" width="20" height="18" fill="#eee" stroke="#444" strokeWidth="1.4" /></FooterIcon>
        <FooterIcon><path d="M1 8H15V19H1ZM1 8L6 1H21L15 8M21 1V12L15 19" fill="#eee" stroke="#444" /></FooterIcon>
        <FooterIcon>
          <circle cx="9" cy="8" r="6" fill="#e8c32e" />
          <path d="M12 10L20 19M20 10L12 19" stroke="#d02a2a" strokeWidth="2.5" />
        </FooterIcon>
        <FooterIcon>
          <circle cx="9" cy="7" r="6" stroke="#2f78b4" strokeWidth="1.5" />
          <path d="M5 12V19H12" stroke="#444" />
          <path d="M13 11L20 19M20 11L13 19" stroke="#d02a2a" strokeWidth="2.5" />
        </FooterIcon>
        <FooterIcon>
          <rect x="1" y="9" width="7" height="9" fill="#4d94cc" />
          <path d="M8 4H20V10H8Z" fill="#4d94cc" stroke="#2a5fa0" />
          <rect x="9" y="11" width="8" height="7" fill="#eee" stroke="#c02a2a" />
        </FooterIcon>
        <FooterIcon>
          <rect x="1" y="8" width="7" height="10" fill="#4d94cc" />
          <rect x="9" y="4" width="12" height="15" fill="#e2eef8" stroke="#2a5fa0" />
          <circle cx="15" cy="10" r="3" stroke="#444" />
        </FooterIcon>
        <FooterIcon>
          <path d="M1 10L9 3L21 8L13 17Z" fill="#fff" stroke="#555" />
          <circle cx="8" cy="10" r="2.500" stroke="#333" />
          <circle cx="14" cy="10" r="2.500" stroke="#333" />
        </FooterIcon>
        <FooterIcon>
          <path d="M11 2C15 2 17 5 17 8C17 11 14 13 14 15H8C8 13 5 11 5 8C5 5 7 2 11 2Z" fill="#8fc2e8" stroke="#777" />
          <rect x="8" y="16" width="6" height="3" fill="#555" />
        </FooterIcon>
        <FooterIcon>
          <rect x="2" y="3" width="18" height="15" fill="#e8e8e8" stroke="#222" strokeWidth="1.5" strokeDasharray="3 1" />
          <circle cx="14" cy="12" r="3" fill="#333" />
        </FooterIcon>
        <FooterIcon>
          <path d="M3 5H19V19H3ZM8 5V19M14 5V19M3 11H19" stroke="#bdbdbd" fill="none" />
        </FooterIcon>
        <FooterIcon>
          <path d="M2 2H20M2 2V19M20 2V10M2 18H9" stroke="#555" strokeWidth="1.5" />
          <rect x="11" y="11" width="9" height="8" fill="#555" />
        </FooterIcon>
      </div>
      <ChevronLeft className="ml-[4px] w-[16px] h-[16px] text-[#333]" strokeWidth={2.5} />
      <div className="ml-[509px] w-[22px] h-[22px] bg-[#cdcdcd]" />
      <ChevronRight className="ml-[503px] w-[16px] h-[16px] text-[#333]" strokeWidth={2.5} />
    </div>
  )
}

function StatusBar() {
  return (
    <div className="h-[26px] bg-[#c9c9c9] flex items-center pt-[8px] text-[15px] text-[#333] shrink-0 whitespace-nowrap">
      <span className="pl-[2px] w-[727px]">Floors : Floor : LO-LOSA NERVADA 30 CM : R0</span>
      <Svg w={22} h={24}>
        <rect x="2" y="12" width="7" height="11" fill="#4d94cc" />
        <rect x="10" y="4" width="7" height="19" fill="#dff" stroke="#444" />
        <circle cx="13" cy="4" r="3" fill="#6aa84f" />
      </Svg>
      <div className="ml-[9px] w-[268px] h-[20px] self-end bg-white flex items-center justify-end pr-[4px]">
        <ChevronDown className="w-[14px] h-[14px] text-[#aaa]" />
      </div>
      <div className="ml-[10px]">
        <Svg w={18} h={22}>
          <rect x="3" y="1" width="13" height="7" fill="#ddd" stroke="#aaa" />
          <path d="M10 8V14H6V22" stroke="#8a8a8a" strokeWidth="3" />
        </Svg>
      </div>
      <span className="ml-[3px] w-[41px]">:0</span>
      <GrayStatus color="#333" />
      <div className="ml-[12px] w-[20px] h-[22px] bg-[#8f8f8f] flex items-center justify-center text-[#ccc] text-[12px]">⇥</div>
      <div className="ml-[11px] w-[268px] h-[20px] self-end bg-white flex items-center justify-between pl-[2px] pr-[4px] text-[#8a8a8a]">
        <span>Main Model</span>
        <ChevronDown className="w-[14px] h-[14px] text-[#aaa]" />
      </div>
      <div className="ml-[298px] flex items-center gap-[11px]">
        <Svg w={21} h={24}>
          <rect x="1" y="1" width="19" height="8" rx="2" fill="#e5c62c" stroke="#9a8520" />
          <path d="M8 6V23L12 19L15 24L17 23L14 18H19Z" fill="#fff" stroke="#333" />
        </Svg>
        <Svg w={21} h={24}>
          <path d="M1 19L12 3V19Z" fill="#dff" stroke="#2f78b4" />
          <path d="M13 1L20 8M20 1L13 8" stroke="#d02a2a" strokeWidth="2.5" />
          <path d="M11 10V23L14 20L17 24" fill="#fff" stroke="#333" />
        </Svg>
        <Svg w={21} h={24}>
          <rect x="2" y="2" width="11" height="18" fill="#e9a04a" stroke="#8a4a1a" />
          <path d="M4 7H11M4 12H11" stroke="#c02a2a" />
          <path d="M13 12V24L16 21L19 24" fill="#fff" stroke="#333" />
        </Svg>
        <Svg w={21} h={24}>
          <path d="M2 5L10 2V19L2 22Z" fill="#8fc8ea" stroke="#2f78b4" />
          <path d="M12 12V24L15 21L18 24" fill="#fff" stroke="#333" />
        </Svg>
        <Svg w={21} h={24}>
          <path d="M8 1V15M1 8H15M8 1L5 4M8 1L11 4M1 8L4 5M1 8L4 11M15 8L12 5M15 8L12 11" stroke="#222" strokeWidth="1.5" />
          <path d="M11 10V23L14 20L18 24" fill="#fff" stroke="#333" />
        </Svg>
        <Svg w={21} h={22}>
          <circle cx="10" cy="11" r="7" stroke="#aaa" strokeWidth="3" strokeDasharray="3 2" />
        </Svg>
        <div className="flex items-center">
          <Svg w={22} h={22}>
            <path d="M1 1H21L13 12V21L9 19V12Z" fill="#ddd" stroke="#555" />
          </Svg>
          <span>:1</span>
        </div>
      </div>
    </div>
  )
}

function ViewArea() {
  return (
    <div className="flex-1 flex flex-col min-w-0">
      <div className="h-[27px] bg-[#c9c9c9] flex items-stretch text-[15px] shrink-0">
        <div className="w-[169px] flex items-center pl-[6px] text-[#555] gap-[12px]">
          <Svg w={18} h={20}>
            <path d="M1 6L9 1L17 5V15L9 19L1 15Z" fill="#c0c0c0" stroke="#8a8a8a" />
            <path d="M1 6L9 10L17 5M9 10V19" stroke="#8a8a8a" />
          </Svg>
          {'{3D}'}
        </div>
        <div className="w-[170px] bg-white flex items-center pl-[6px] text-[#333] font-semibold">
          <Svg w={22} h={21}>
            <rect x="0.5" y="3.500" width="20" height="17" fill="#fff" stroke="#666" />
            <rect x="5.500" y="0.5" width="16" height="18" fill="#f2f2f2" stroke="#666" />
            <path d="M12 6V10M15 6V10M11 13H18" stroke="#666" />
          </Svg>
          <span className="ml-[9px] w-[109px] whitespace-nowrap">Planta nivel 2</span>
          <CloseX w={14} h={13} color="#333" />
        </div>
        <div className="ml-auto mr-[4px] flex items-center">
          <Svg w={13} h={12}>
            <path d="M1 1H12M1 4H12" stroke="#333" strokeWidth="1.4" />
            <path d="M0 6H13L6.500 12Z" fill="#333" />
          </Svg>
        </div>
      </div>
      <div className="relative h-[772px] flex shrink-0">
        <PlanDrawing />
        <div className="w-[22px] bg-[#f0f0f0] flex flex-col items-center">
          <div className="h-[24px] flex items-center"><ChevronUp className="w-[16px] h-[16px] text-[#333]" strokeWidth={3} /></div>
          <div className="mt-[352px] w-full h-[22px] bg-[#cdcdcd]" />
          <div className="mt-auto h-[22px] flex items-center"><ChevronDown className="w-[16px] h-[16px] text-[#333]" strokeWidth={3} /></div>
        </div>
        {/* navigation bar over the canvas */}
        <div className="absolute left-[1417px] top-[2px] w-[37px] h-[124px] bg-[#f5f5f5] border-2 border-[#c8c8c8] rounded-[5px] flex flex-col items-center">
          <div className="self-end mr-[1px] mt-[1px] w-[8px] h-[8px] rounded-full border border-[#aaa] bg-[#ddd]" />
          <div className="mt-[9px]">
            <Svg w={26} h={26}>
              <path d="M6 2H17Q20 2 20 6V17Q14 22 6 20Q2 18 2 12V6Q2 2 6 2Z" stroke="#a8a8a8" strokeWidth="1.4" />
              <ellipse cx="11" cy="10" rx="5" ry="6" stroke="#a8a8a8" />
              <text x="15" y="25" fontSize="9" fill="#4d80b8" fontFamily="Liberation Sans">2D</text>
            </Svg>
          </div>
          <div className="mt-[1px]"><Caret color="#888" /></div>
          <div className="mt-[3px] w-[26px] h-px bg-[#ccc]" />
          <div className="mt-[8px]">
            <Svg w={22} h={22}>
              <rect x="2" y="1" width="12" height="13" fill="#a5cc95" stroke="#76a463" />
              <circle cx="14" cy="14" r="4" fill="#eee" stroke="#888" />
              <path d="M17 17L21 21" stroke="#888" strokeWidth="2" />
            </Svg>
          </div>
          <div className="mt-[8px]"><Caret color="#888" /></div>
          <div className="mt-auto mb-[1px] self-end mr-[1px] w-[8px] h-[8px] rounded-full border border-[#aaa] bg-[#ddd]" />
        </div>
      </div>
      <ViewFooter />
    </div>
  )
}

export default function App() {
  return (
    <div className="w-[2028px] h-[1080px] overflow-hidden flex flex-col bg-[#f0f0f0] font-['Noto_Sans','Noto_Sans_CJK_SC',sans-serif]">
      <TitleBar />
      <TabRow />
      <Ribbon />
      <div className="h-[34px] bg-[#e3f0d6] flex items-center pl-[10px] text-[15px] text-[#aaa] shrink-0">Modify | Floors</div>
      <div className="h-[2px] bg-[#c9c9c9] shrink-0" />
      <div className="flex-1 flex min-h-0">
        <div className="w-[545px] flex flex-col shrink-0">
          <PropertiesPanel />
          <div className="h-[5px] bg-[#d8d8d8] shrink-0" />
          <ProjectBrowser />
        </div>
        <div className="w-[6px] bg-[#e6e6e6] shrink-0" />
        <ViewArea />
      </div>
      <StatusBar />
    </div>
  )
}
